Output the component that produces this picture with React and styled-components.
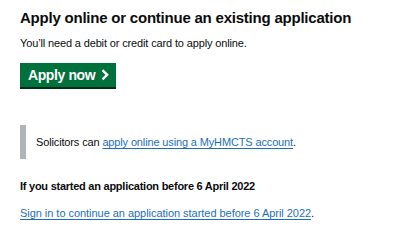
import React from "react";
import styled, { createGlobalStyle } from "styled-components";

const GlobalStyle = createGlobalStyle`
  html, body {
    margin: 0;
    padding: 0;
    background: #ffffff;
  }
  body {
    font-family: "Liberation Sans", Arial, sans-serif;
    color: #0b0c0c;
    -webkit-font-smoothing: antialiased;
  }
`;

const Page = styled.main`
  padding: 9px 20px 0;
  width: 407px;
  box-sizing: border-box;
`;

const Heading = styled.h2`
  margin: 0 0 8px;
  font-size: 15px;
  line-height: 18px;
  font-weight: 700;
  letter-spacing: -0.22px;
`;

const Body = styled.p`
  margin: 0 0 12px;
  font-size: 11px;
  line-height: 16px;
  letter-spacing: ${(p) => p.$spacing || "-0.14px"};
`;

const StartButton = styled.a`
  display: flex;
  width: max-content;
  align-items: center;
  gap: 6px;
  height: 24px;
  padding: 0 7px 0 8px;
  background: #00703c;
  box-shadow: 0 2px 0 #002d18;
  color: #ffffff;
  font-size: 14px;
  font-weight: 700;
  letter-spacing: -0.4px;
  text-decoration: none;
`;

const Inset = styled.div`
  margin: 38px 0 0;
  padding: 9px 0 9px 10px;
  border-left: 6px solid #b1b4b6;
  font-size: 11px;
  line-height: 16px;
  letter-spacing: -0.14px;
`;

const Link = styled.a`
  color: #1d70b8;
  text-decoration: underline;
  text-decoration-thickness: 1px;
  text-underline-offset: 2px;
`;

const SubHeading = styled.h3`
  margin: 19px 0 11px;
  font-size: 11px;
  line-height: 16px;
  font-weight: 700;
  letter-spacing: -0.25px;
`;

const Chevron = () => (
  <svg width="8" height="12" viewBox="0 0 8 12" aria-hidden="true">
    <path d="M1.5 1.2 L6.1 5.8 L1.5 10.4" fill="none" stroke="#fff" strokeWidth="2.4" />
  </svg>
);

export default function App() {
  return (
    <>
      <GlobalStyle />
      <Page>
        <Heading>Apply online or continue an existing application</Heading>
        <Body>You’ll need a debit or credit card to apply online.</Body>
        <StartButton href="#">
          Apply now
          <Chevron />
        </StartButton>
        <Inset>
          Solicitors can <Link href="#">apply online using a MyHMCTS account</Link>.
        </Inset>
        <SubHeading>If you started an application before 6 April 2022</SubHeading>
        <Body $spacing="-0.04px">
          <Link href="#">Sign in to continue an application started before 6 April 2022</Link>.
        </Body>
      </Page>
    </>
  );
}
